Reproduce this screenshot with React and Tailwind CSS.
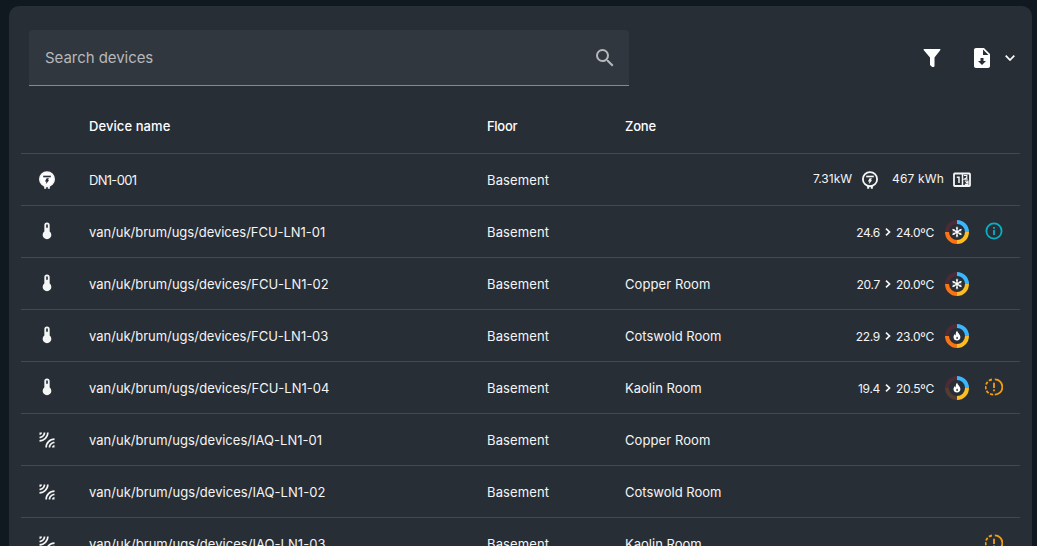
import { MdSearch, MdLeakAdd } from "react-icons/md";

function Glyph({ d, className }) {
  return (
    <svg viewBox="0 0 24 24" fill="currentColor" fillRule="evenodd" className={`shrink-0 ${className}`}>
      <path d={d} />
    </svg>
  );
}

const THERMOMETER = "M15.2 12.6V5A3.2 3.2 0 0 0 8.8 5V12.6A5.2 5.2 0 1 0 15.2 12.6M12 4A1 1 0 0 1 13 5V8H11V5A1 1 0 0 1 12 4Z";
const FILE = "M14 2H6C4.89 2 4 2.89 4 4V20C4 21.11 4.89 22 6 22H18C19.11 22 20 21.11 20 20V8L14 2M12 19L8 15H10.5V12H13.5V15H16L12 19M13 9V3.5L18.5 9H13Z";

function Meter({ filled, className }) {
  return (
    <svg viewBox="0 0 24 24" className={`shrink-0 ${className}`} fill="none">
      <path d="M9.8 18V22.5M14.2 18V22.5" stroke="currentColor" strokeWidth="2.4" />
      <circle cx="12" cy="11" r="8.5" stroke="currentColor" strokeWidth="2.2" className={filled ? "fill-white" : ""} />
      <g className={filled ? "text-[#282e36]" : ""}>
        <path d="M7.4 7.8H16.6" stroke="currentColor" strokeWidth="2" />
        <path d="M11.5 10H14.3L13.2 12.3H14.6L10.5 17L11.3 13.8H9.5Z" fill="currentColor" />
      </g>
    </svg>
  );
}

function Counter() {
  return (
    <svg viewBox="0 0 22 22" className="size-[22px] shrink-0" fill="none" stroke="currentColor" strokeWidth="1.5">
      <rect x="3" y="4.5" width="16" height="12.5" rx=".8" strokeWidth="1.8" />
      <path d="M11.5 4.5V17M5.8 8.2H8V14" />
      <path d="M12.8 6.5H15.8V8.5L13.4 10.2H16.8M13.8 12.2H17V15.4H13.8M14.8 13.7H17" strokeWidth="1.2" />
    </svg>
  );
}

function Dial({ mode, dimHeat }) {
  return (
    <svg viewBox="0 0 24 24" className="size-6 shrink-0" fill="none" strokeWidth="4">
      <path d="M12 2A10 10 0 0 1 22 12" stroke="#38b6ff" />
      <path d="M22 12A10 10 0 0 1 12 22" stroke="#fbbc24" />
      <path d="M12 22A10 10 0 0 1 2 12" stroke={dimHeat ? "#533b32" : "#fb7414"} />
      <path d="M2 12A10 10 0 0 1 12 2" stroke="#4c2b39" />
      {mode === "cool" ? (
        <g stroke="#fff" strokeWidth="1.3">
          <path d="M12 6.8V17.2M7.5 9.4L16.5 14.6M16.5 9.4L7.5 14.6" />
          <path d="M10.9 7.8L12 8.9L13.1 7.8M10.9 16.2L12 15.1L13.1 16.2M7.8 11L9.3 10.5L8.9 9M16.2 13L14.7 13.5L15.1 15M15.1 9L14.7 10.5L16.2 11M8.9 15L9.3 13.5L7.8 13" strokeWidth=".8" />
        </g>
      ) : (
        <>
          <path d="M12.2 6.7C12.4 8.7 15.4 10.2 15.4 13.1C15.4 15.2 14 16.5 12 16.5C10 16.5 8.5 15.2 8.5 13.2C8.5 11.7 9.3 10.6 10 9.9C10.1 10.7 10.3 11.1 10.8 11.4C10.6 9.4 11 7.7 12.2 6.7Z" fill="#fff" />
          <path d="M12.1 12.6L12.9 13.7Q13.2 15.1 12.1 15.1Q11 15.1 11.3 13.7Z" fill="#282e36" />
        </>
      )}
    </svg>
  );
}

function Status({ kind }) {
  if (kind === "info")
    return (
      <svg viewBox="0 0 18 18" className="-mt-px size-[18px] text-[#06b0c6]" fill="none" stroke="currentColor" strokeWidth="1.8">
        <circle cx="9" cy="9" r="7.6" />
        <path d="M9 8V13M9 5V6.7" />
      </svg>
    );
  if (kind === "alert")
    return (
      <svg viewBox="0 0 18 18" className="-mt-px size-[18px] text-[#f59e0b]" fill="none" stroke="currentColor" strokeWidth="1.8">
        <path d="M9.8 1.4A7.6 7.6 0 0 1 9.8 16.6" />
        <path d="M8.2 16.6A7.6 7.6 0 0 1 8.2 1.4" strokeDasharray="3.2 1.6" />
        <path d="M9 4.8V10M9 11.5V13.2" />
      </svg>
    );
  return null;
}

const path = "van/uk/brum/ugs/devices/";
const rows = [
  { icon: "meter", name: "DN1-001", track: "tracking-[-0.7px]" },
  { icon: "temp", name: path + "FCU-LN1-01", track: "tracking-[-0.03px]", from: "24.6", to: "24.0", mode: "cool", status: "info" },
  { icon: "temp", name: path + "FCU-LN1-02", track: "tracking-[-0.01px]", zone: "Copper Room", from: "20.7", to: "20.0", mode: "cool" },
  { icon: "temp", name: path + "FCU-LN1-03", track: "tracking-[-0.02px]", zone: "Cotswold Room", from: "22.9", to: "23.0", mode: "heat" },
  { icon: "temp", name: path + "FCU-LN1-04", track: "tracking-[0px]", zone: "Kaolin Room", from: "19.4", to: "20.5", mode: "heat", dim: true, status: "alert" },
  { icon: "leak", name: path + "IAQ-LN1-01", track: "tracking-[0.02px]", zone: "Copper Room" },
  { icon: "leak", name: path + "IAQ-LN1-02", track: "tracking-[0.04px]", zone: "Cotswold Room" },
  { icon: "leak", name: path + "IAQ-LN1-03", track: "tracking-[0.04px]", zone: "Kaolin Room", status: "alert" },
];

function Row({ row }) {
  return (
    <div className="grid h-13 shrink-0 grid-cols-[68px_398px_138px_1fr] items-center border-t border-[#44484f]">
      <div className="flex w-[52px] justify-center">
        {row.icon === "meter" && <Meter filled className="size-5" />}
        {row.icon === "temp" && <Glyph d={THERMOMETER} className="-mt-px size-5" />}
        {row.icon === "leak" && <MdLeakAdd className="size-5" />}
      </div>
      <span className={`pt-0.5 ${row.track}`}>{row.name}</span>
      <span className="pt-0.5 tracking-[0.12px]">Basement</span>
      <div className="flex items-center justify-between">
        <span className={row.zone === "Copper Room" ? "pt-0.5 tracking-[0.09px]" : "pt-0.5"}>{row.zone}</span>
        <div className="flex items-center">
          {row.icon === "meter" && (
            <div className="mr-[47px] flex items-center text-xs">
              <span className="-mt-px">7.31kW</span>
              <Meter className="ml-2 mr-3 size-5" />
              <span className="-mt-px tracking-[0.15px]">467 kWh</span>
              <span className="ml-[7px]"><Counter /></span>
            </div>
          )}
          {row.mode && (
            <div className="flex items-center text-xs">
              <span className="pt-0.5 tracking-[-0.3px]">{row.from}</span>
              <svg viewBox="0 0 6 8" className="mx-[5px] h-2 w-1.5" fill="none" stroke="currentColor" strokeWidth="1.7"><path d="M1 .7L4.5 4L1 7.3" /></svg>
              <span className="mr-[11px] pt-0.5 tracking-[-0.23px]">{row.to}ºC</span>
              <Dial mode={row.mode} dimHeat={row.dim} />
            </div>
          )}
          {row.icon !== "meter" && <div className="flex w-[51px] justify-center pr-[1px]"><Status kind={row.status} /></div>}
        </div>
      </div>
    </div>
  );
}

export default function App() {
  return (
    <div className="h-[546px] overflow-hidden bg-[#111920] pl-[9px] pr-[5px] pt-1.5 font-['Inter',sans-serif] text-[13px] text-[#f4f5f5]">
      <main className="flex h-[600px] flex-col rounded-[10px] bg-[#282e36] px-3 pt-6">
        <div className="flex h-14 shrink-0 items-center justify-between pl-2">
          <div className="flex h-14 w-[600px] items-center justify-between rounded-t border-b border-[#858990] bg-[#31373f] px-3 pl-4 text-[#b5b8bb]">
            <span className="pt-0.5 text-[15px] tracking-[-0.05px]">Search devices</span>
            <MdSearch className="size-6" />
          </div>
          <div className="flex items-center pr-[5px] text-white">
            <svg viewBox="0 0 18 18" className="size-[18px]" fill="currentColor"><path d="M1.3 0H16.7Q18 0 17.2 1.2L11.5 8.5V16.8Q11.5 18 10.3 18H9.2L7 16V8.5L.8 1.2Q0 0 1.3 0Z" /></svg>
            <Glyph d={FILE} className="ml-[29px] size-6" />
            <svg viewBox="0 0 10 6" className="ml-[11px] h-1.5 w-2.5" fill="none" stroke="currentColor" strokeWidth="1.7"><path d="M.7.7L5 5L9.3.7" /></svg>
          </div>
        </div>
        <div className="mt-[11px] grid h-14 shrink-0 grid-cols-[68px_398px_138px_1fr] items-center pt-[3px] font-medium text-white">
          <span />
          <span className="tracking-[0.08px]">Device name</span>
          <span className="tracking-[-0.3px]">Floor</span>
          <span className="tracking-[-0.2px]">Zone</span>
        </div>
        {rows.map((row) => <Row key={row.name} row={row} />)}
      </main>
    </div>
  );
}
